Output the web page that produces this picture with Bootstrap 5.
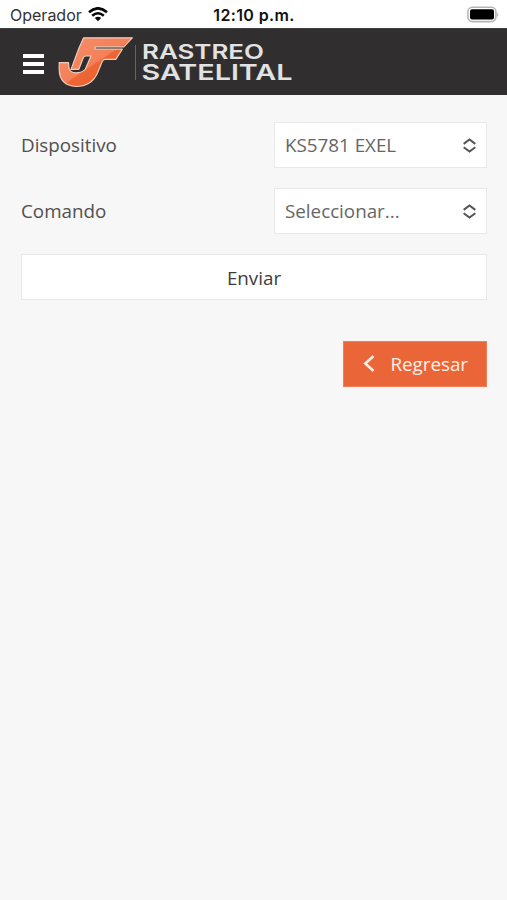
<!DOCTYPE html>
<html lang="es">
<head>
<meta charset="utf-8">
<meta name="viewport" content="width=device-width, initial-scale=1">
<title>Rastreo Satelital</title>
<link href="https://cdn.jsdelivr.net/npm/bootstrap@5.3.0/dist/css/bootstrap.min.css" rel="stylesheet">
<style>
body{background:#f7f7f7;font-family:"Open Sans","Noto Sans",sans-serif;font-size:18.8px;line-height:28px;color:#505050;min-height:100vh}
.status{height:28px;background:#fff;color:#333;font-family:Inter,sans-serif;font-size:16px;line-height:28px;padding:1px 8px 0 10px}
.status .clock{font-weight:600;color:#111;letter-spacing:.35px;margin-right:1px}
.status .side{flex:1 1 0}
.wifi{margin-left:6px}
.topbar{height:67px;background:#302e2f;padding:0 0 0 23px;border-top:1px solid #3f3e3e}
.burger{width:21px;height:21px;margin-right:10px;margin-top:4px}
.content{padding:27px 20px 0 21px}
.field-row{height:46px;margin-bottom:20px}
.picker{width:213px;height:46px;background:#fff;border:1.5px solid #e9e9e9;color:#666;padding:0 10px;border-radius:0;font-size:inherit}
.send{height:46px;background:#fff;border:1.5px solid #e9e9e9;border-radius:0;color:#3c3c3c;font-size:inherit;line-height:28px;padding:1px 0 0}
.back{width:144px;height:46px;margin-top:41px;background:#ea6639;border:1px solid #ee8059;border-radius:0;color:#fff0e6;font-size:inherit;padding:0 18px 0 19px}
.back:hover{background:#d95a30;color:#fff}
</style>
<script src="https://cdn.jsdelivr.net/npm/bootstrap@5.3.0/dist/js/bootstrap.bundle.min.js"></script>
</head>
<body>
<header>
  <div class="status d-flex align-items-center">
    <div class="side d-flex align-items-center">
      <span>Operador</span>
      <svg width="20" height="15" viewBox="0 0 20 15" class="wifi" aria-hidden="true">
        <g fill="none" stroke="#080808" stroke-width="2.6"><path d="M1 5.2Q10-2.6 19 5.2"/><path d="M4.2 8.7Q10 3.8 15.8 8.7"/></g>
        <path d="M6.8 10.9Q10 8.4 13.2 10.9L10 14.3Z" fill="#080808"/>
      </svg>
    </div>
    <span class="clock">12:10 p.m.</span>
    <div class="side d-flex justify-content-end">
      <svg width="33" height="18" viewBox="0 0 33 18" aria-hidden="true">
        <rect x="1.9" y="1.2" width="28" height="14.4" rx="4.5" fill="#fff" stroke="#b5b5b5" stroke-width="1.6"/>
        <rect x="4" y="3.3" width="24" height="10.2" rx="2"/>
        <path d="M31.4 6.1Q33 8.6 31.4 11.1Z" fill="#999"/>
      </svg>
    </div>
  </div>
  <nav class="topbar d-flex align-items-center">
    <svg class="burger" viewBox="0 0 21 21" role="button" aria-label="Menú"><path d="M0 2h21M0 10h21M0 18h21" stroke="#fff" stroke-width="4"/></svg>
    <svg width="240" height="60" viewBox="54 32 240 60" role="img" aria-label="JF Rastreo Satelital">
      <defs><linearGradient id="flame" x1="0" y1="0" x2="1" y2="1"><stop offset="0" stop-color="#f5906e"/><stop offset=".5" stop-color="#f48058"/><stop offset=".52" stop-color="#ee6636"/><stop offset="1" stop-color="#e75b2c"/></linearGradient></defs>
      <path d="M83.6 37.8H132.3L123.8 46.8H95V49.2H122.3L115.8 59.4H105Q103 59.5 102 62L97.5 73Q91.7 86.3 76 86.5Q59.7 85.4 59.2 70V62.6H68.5L69 68Q70 72.8 76 72.8Q82.5 72.8 85.4 69L91 56H85.6Q84 56 83 58.5L78.8 69.4H71L79 48Z" fill="url(#flame)" stroke="#edcdb9" stroke-width="1.2" stroke-linejoin="round"/>
      <path d="M135.5 45V80" stroke="#666263" stroke-width="1"/>
      <g font-family="Inter,sans-serif" fill="#e2e2e2">
        <text x="142" y="58.8" font-size="19.6" font-weight="600" textLength="122" lengthAdjust="spacingAndGlyphs">RASTREO</text>
        <text x="141.5" y="79.8" font-size="22" font-weight="600" textLength="151" lengthAdjust="spacingAndGlyphs">SATELITAL</text>
      </g>
    </svg>
  </nav>
</header>
<main class="content">
  <div class="field-row d-flex align-items-center justify-content-between">
    <span>Dispositivo</span>
    <div class="picker d-flex align-items-center justify-content-between" role="button"><span>KS5781 EXEL</span>
      <svg width="13" height="15" viewBox="0 0 13 15" fill="none" stroke="#555" stroke-width="2" aria-hidden="true"><path d="M.7 5.9 6.5 1.4 12.3 5.9M.7 9.3 6.5 13.6 12.3 9.3"/></svg></div>
  </div>
  <div class="field-row d-flex align-items-center justify-content-between">
    <span>Comando</span>
    <div class="picker d-flex align-items-center justify-content-between" role="button"><span>Seleccionar...</span>
      <svg width="13" height="15" viewBox="0 0 13 15" fill="none" stroke="#555" stroke-width="2" aria-hidden="true"><path d="M.7 5.9 6.5 1.4 12.3 5.9M.7 9.3 6.5 13.6 12.3 9.3"/></svg></div>
  </div>
  <button type="button" class="send btn w-100 d-block">Enviar</button>
  <div class="d-flex justify-content-end">
    <button type="button" class="back btn d-flex align-items-center justify-content-between">
      <svg width="12" height="18" viewBox="0 0 12 18" fill="none" stroke="currentColor" stroke-width="2.6" aria-hidden="true"><path d="M10.5 1 2.3 8.5 10.5 16"/></svg><span>Regresar</span></button>
  </div>
</main>
</body>
</html>
